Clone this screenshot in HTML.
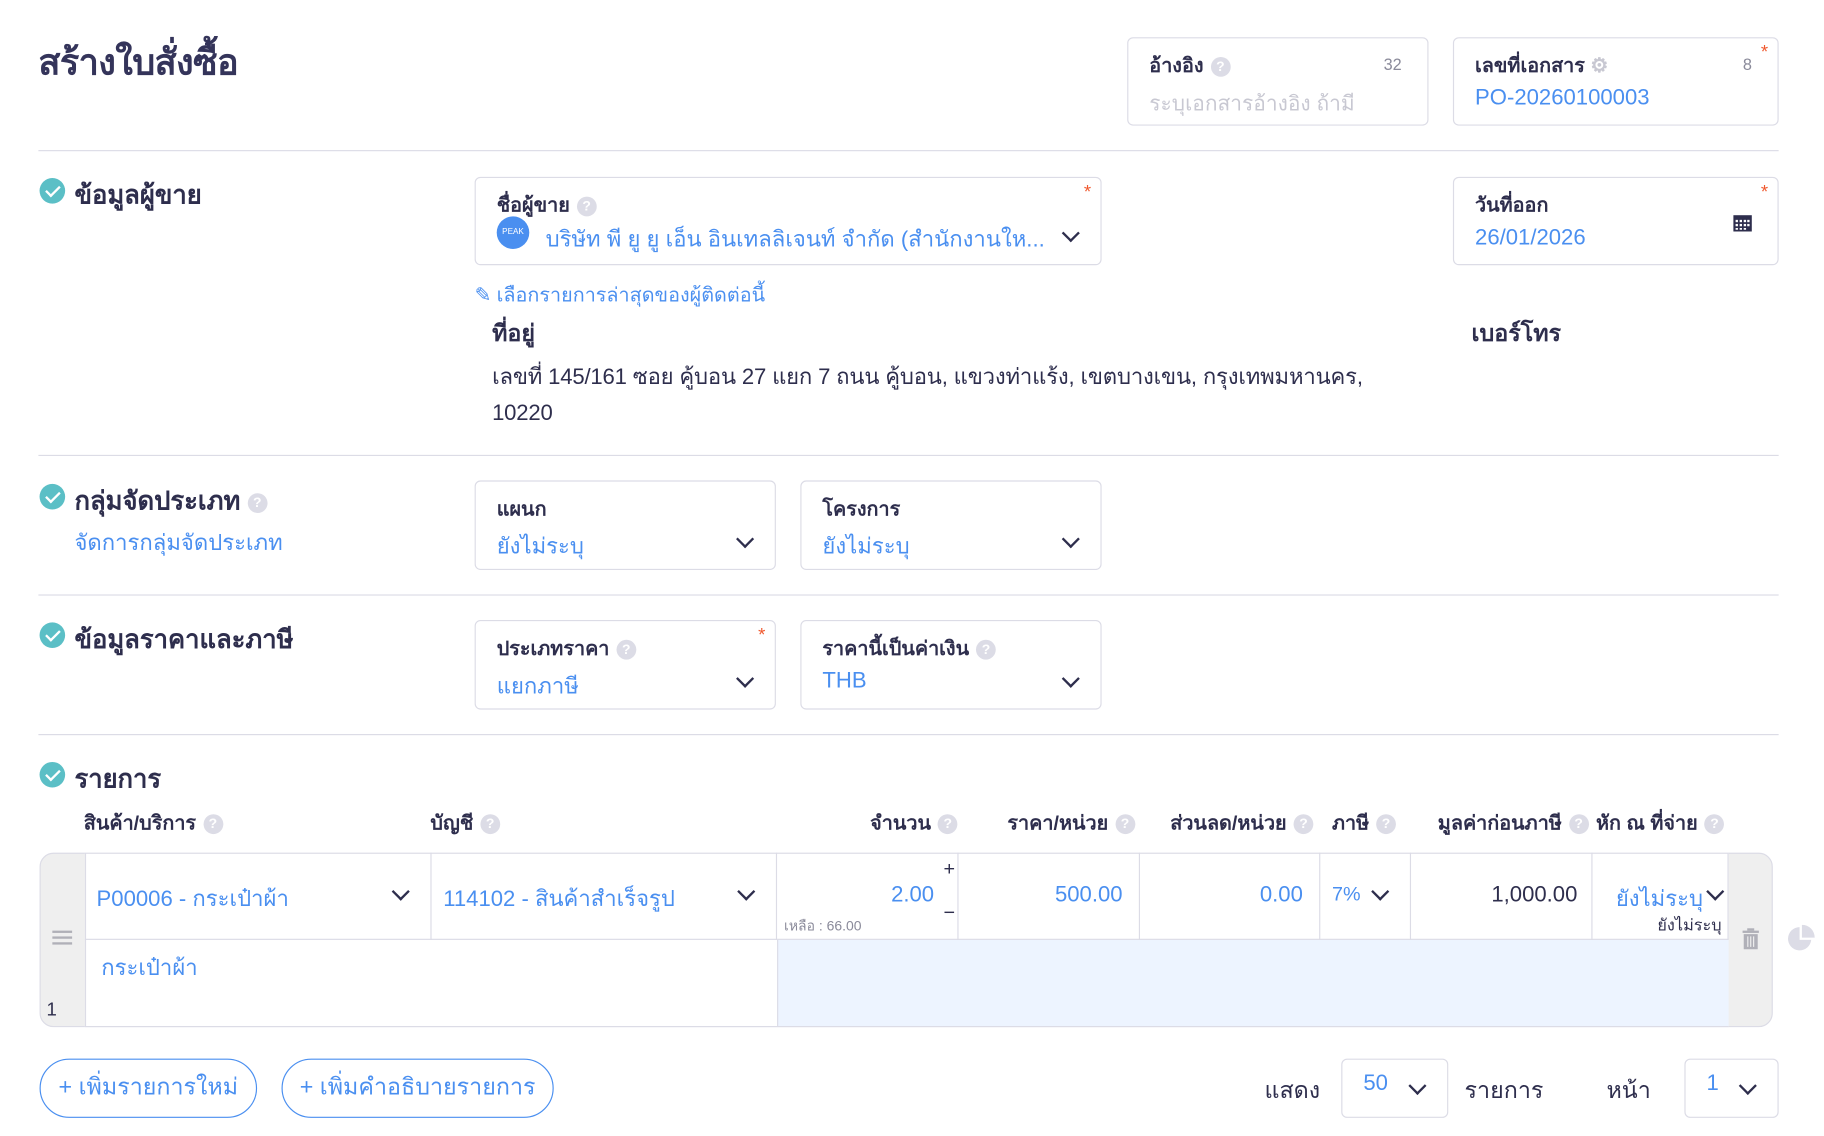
<!DOCTYPE html>
<html><head><meta charset="utf-8"><style>
html,body{margin:0;padding:0;background:#fff;width:1824px;height:1136px;overflow:hidden}
#w{position:absolute;left:0;top:0;width:1568px;height:976px;transform:scale(1.16327);transform-origin:0 0;font-family:"Liberation Sans","Noto Sans CJK SC",sans-serif;color:#2e2e4d}
.a{position:absolute;white-space:nowrap}
.box{position:absolute;border:1px solid #dcdce6;border-radius:5px;box-sizing:border-box;background:#fff}
.lbl{position:absolute;left:18px;top:10px;font-size:17px;font-weight:bold;color:#2e2e4d}
.val{position:absolute;left:18px;top:41px;font-size:19px;color:#4a8ff0}
.q{display:inline-block;width:17px;height:17px;border-radius:50%;background:#dcdce6;color:#fff;font-size:12px;text-align:center;line-height:17px;vertical-align:middle;margin-left:6px;font-weight:bold}
.star{position:absolute;right:8px;top:4px;color:#f0582e;font-size:16px}
.chev{position:absolute;width:9px;height:9px;border-right:2px solid #2e2e4d;border-bottom:2px solid #2e2e4d;transform:rotate(45deg)}
.hr{position:absolute;left:33px;width:1496px;height:1px;background:#dcdce6}
.chk{position:absolute;width:22px;height:22px;border-radius:50%;background:#5bbfc6}
.chk:after{content:"";position:absolute;left:8px;top:4px;width:5px;height:10px;border-right:2px solid #fff;border-bottom:2px solid #fff;transform:rotate(45deg)}
.sec{position:absolute;left:64px;font-size:22px;font-weight:bold}
.th{position:absolute;top:694px;font-size:17px;font-weight:bold}
.cell{position:absolute;top:733px;height:75px;border-right:1px solid #dcdce6;box-sizing:border-box}
.btn{position:absolute;top:910px;height:51px;border:1px solid #4a8ff0;border-radius:26px;box-sizing:border-box;color:#4a8ff0;font-size:20px;line-height:49px;text-align:center}
</style></head><body><div id="w">
<div class="a" style="left:33px;top:28px;font-size:31px;font-weight:bold;color:#34345a;letter-spacing:-0.5px">สร้างใบสั่งซื้อ</div>

<div class="box" style="left:969px;top:32px;width:259px;height:76px"><div class="lbl">อ้างอิง<span class="q">?</span></div><div class="a" style="right:22px;top:14px;font-size:14px;color:#8a8a9a">32</div><div class="val" style="color:#c8c8d2;font-size:18px">ระบุเอกสารอ้างอิง ถ้ามี</div></div>
<div class="box" style="left:1249px;top:32px;width:280px;height:76px"><div class="lbl">เลขที่เอกสาร <span style="color:#c8c8d2">⚙</span></div><div class="a" style="right:22px;top:14px;font-size:14px;color:#8a8a9a">8</div><div class="star">*</div><div class="val">PO-20260100003</div></div>
<div class="hr" style="top:129px"></div>

<div class="chk" style="left:34px;top:153px"></div><div class="sec" style="top:150px">ข้อมูลผู้ขาย</div>
<div class="box" style="left:408px;top:152px;width:539px;height:76px"><div class="lbl">ชื่อผู้ขาย<span class="q">?</span></div><div class="star">*</div>
<div class="a" style="left:18px;top:33px;width:28px;height:28px;border-radius:50%;background:#4a8ff0;color:#fff;font-size:7px;line-height:28px;text-align:center">PEAK</div>
<div class="val" style="left:60px;top:38px">บริษัท พี ยู ยู เอ็น อินเทลลิเจนท์ จำกัด (สำนักงานให...</div><div class="chev" style="right:20px;top:42px"></div></div>
<div class="box" style="left:1249px;top:152px;width:280px;height:76px"><div class="lbl">วันที่ออก</div><div class="star">*</div><div class="val">26/01/2026</div>
<svg class="a" style="right:22px;top:30px" width="16" height="16" viewBox="0 0 16 16"><rect x="0" y="2" width="16" height="14" fill="#2e2e4d"/><g fill="#fff"><rect x="2" y="6" width="2" height="2"/><rect x="5.5" y="6" width="2" height="2"/><rect x="9" y="6" width="2" height="2"/><rect x="12" y="6" width="2" height="2"/><rect x="2" y="9.5" width="2" height="2"/><rect x="5.5" y="9.5" width="2" height="2"/><rect x="9" y="9.5" width="2" height="2"/><rect x="12" y="9.5" width="2" height="2"/><rect x="2" y="13" width="2" height="1.5"/><rect x="5.5" y="13" width="2" height="1.5"/><rect x="9" y="13" width="2" height="1.5"/></g></svg></div>
<div class="a" style="left:408px;top:240px;font-size:17px;color:#4a8ff0">✎ เลือกรายการล่าสุดของผู้ติดต่อนี้</div>
<div class="a" style="left:423px;top:270px;font-size:20px;font-weight:bold">ที่อยู่</div>
<div class="a" style="left:1265px;top:270px;font-size:20px;font-weight:bold">เบอร์โทร</div>
<div class="a" style="left:423px;top:309px;font-size:19px;line-height:31px;letter-spacing:-0.15px">เลขที่ 145/161 ซอย คู้บอน 27 แยก 7 ถนน คู้บอน, แขวงท่าแร้ง, เขตบางเขน, กรุงเทพมหานคร,<br>10220</div>
<div class="hr" style="top:391px"></div>

<div class="chk" style="left:34px;top:416px"></div><div class="sec" style="top:413px">กลุ่มจัดประเภท<span class="q">?</span></div>
<div class="a" style="left:64px;top:452px;font-size:19px;color:#4a8ff0">จัดการกลุ่มจัดประเภท</div>
<div class="box" style="left:408px;top:413px;width:259px;height:77px"><div class="lbl">แผนก</div><div class="val">ยังไม่ระบุ</div><div class="chev" style="right:20px;top:44px"></div></div>
<div class="box" style="left:688px;top:413px;width:259px;height:77px"><div class="lbl">โครงการ</div><div class="val">ยังไม่ระบุ</div><div class="chev" style="right:20px;top:44px"></div></div>
<div class="hr" style="top:511px"></div>

<div class="chk" style="left:34px;top:535px"></div><div class="sec" style="top:532px">ข้อมูลราคาและภาษี</div>
<div class="box" style="left:408px;top:533px;width:259px;height:77px"><div class="lbl">ประเภทราคา<span class="q">?</span></div><div class="star">*</div><div class="val">แยกภาษี</div><div class="chev" style="right:20px;top:44px"></div></div>
<div class="box" style="left:688px;top:533px;width:259px;height:77px"><div class="lbl">ราคานี้เป็นค่าเงิน<span class="q">?</span></div><div class="val">THB</div><div class="chev" style="right:20px;top:44px"></div></div>
<div class="hr" style="top:631px"></div>

<div class="chk" style="left:34px;top:655px"></div><div class="sec" style="top:652px">รายการ</div>
<div class="th" style="left:72px">สินค้า/บริการ<span class="q">?</span></div>
<div class="th" style="left:370px">บัญชี<span class="q">?</span></div>
<div class="th" style="left:748px">จำนวน<span class="q">?</span></div>
<div class="th" style="left:866px">ราคา/หน่วย<span class="q">?</span></div>
<div class="th" style="left:1006px">ส่วนลด/หน่วย<span class="q">?</span></div>
<div class="th" style="left:1145px">ภาษี<span class="q">?</span></div>
<div class="th" style="left:1236px">มูลค่าก่อนภาษี<span class="q">?</span></div>
<div class="th" style="left:1372px">หัก ณ ที่จ่าย<span class="q">?</span></div>

<div class="a" style="left:34px;top:733px;width:1490px;height:150px;border:1px solid #dcdce6;border-radius:12px;box-sizing:border-box;background:#efefef"></div>
<div class="a" style="left:73px;top:733px;width:1413px;height:150px;background:#fff;border:1px solid #dcdce6;box-sizing:border-box"></div>
<div class="a" style="left:668px;top:808px;width:818px;height:74px;background:#edf4ff;border-left:1px solid #dcdce6;box-sizing:border-box"></div>
<div class="a" style="left:73px;top:807px;width:1413px;height:1px;background:#dcdce6"></div>
<div class="cell" style="left:73px;width:298px"><div class="a" style="left:10px;top:25px;font-size:19px;color:#4a8ff0">P00006 - กระเป๋าผ้า</div><div class="chev" style="right:20px;top:28px"></div></div>
<div class="cell" style="left:371px;width:297px"><div class="a" style="left:10px;top:25px;font-size:19px;color:#4a8ff0">114102 - สินค้าสำเร็จรูป</div><div class="chev" style="right:20px;top:28px"></div></div>
<div class="cell" style="left:668px;width:156px"><div class="a" style="right:20px;top:26px;font-size:19px;color:#4a8ff0">2.00</div><div class="a" style="right:2px;top:4px;font-size:17px">+</div><div class="a" style="right:2px;top:42px;font-size:17px">−</div><div class="a" style="left:6px;top:54px;font-size:12px;color:#8a8a9a">เหลือ : 66.00</div></div>
<div class="cell" style="left:824px;width:156px"><div class="a" style="right:14px;top:26px;font-size:19px;color:#4a8ff0">500.00</div></div>
<div class="cell" style="left:980px;width:155px"><div class="a" style="right:14px;top:26px;font-size:19px;color:#4a8ff0">0.00</div></div>
<div class="cell" style="left:1135px;width:78px"><div class="a" style="left:10px;top:26px;font-size:17px;color:#4a8ff0">7%</div><div class="chev" style="right:20px;top:28px"></div></div>
<div class="cell" style="left:1213px;width:156px"><div class="a" style="right:12px;top:26px;font-size:19px">1,000.00</div></div>
<div class="cell" style="left:1369px;width:117px;border-right:none"><div class="a" style="right:22px;top:25px;font-size:19px;color:#4a8ff0">ยังไม่ระบุ</div><div class="chev" style="right:6px;top:28px"></div><div class="a" style="right:6px;top:52px;font-size:14px">ยังไม่ระบุ</div></div>
<div class="a" style="left:87px;top:817px;font-size:19px;color:#4a8ff0">กระเป๋าผ้า</div>
<div class="a" style="left:45px;top:800px;width:17px;height:2px;background:#b0b0b8;box-shadow:0 5px 0 #b0b0b8,0 10px 0 #b0b0b8"></div>
<div class="a" style="left:40px;top:860px;font-size:16px">1</div>
<svg class="a" style="left:1497px;top:797px" width="16" height="20" viewBox="0 0 16 20"><rect x="1" y="3" width="14" height="2" fill="#b0b0b8"/><rect x="5" y="1" width="6" height="2" fill="#b0b0b8"/><path d="M2 6h12v13H2z" fill="#b0b0b8"/><path d="M5.5 8v9M8 8v9M10.5 8v9" stroke="#efefef" stroke-width="1"/></svg>
<svg class="a" style="left:1537px;top:795px" width="24" height="24" viewBox="0 0 24 24"><path d="M10 2A10 10 0 1 0 20 13H10z" fill="#dcdce6"/><path d="M12 0v11h11A11 11 0 0 0 12 0z" fill="#dcdce6"/></svg>

<div class="btn" style="left:34px;width:187px">+ เพิ่มรายการใหม่</div>
<div class="btn" style="left:242px;width:234px">+ เพิ่มคำอธิบายรายการ</div>
<div class="a" style="left:1087px;top:921px;font-size:20px">แสดง</div>
<div class="box" style="left:1153px;top:910px;width:92px;height:51px"><div class="a" style="left:18px;top:10px;font-size:19px;color:#4a8ff0">50</div><div class="chev" style="right:20px;top:17px"></div></div>
<div class="a" style="left:1259px;top:921px;font-size:20px">รายการ</div>
<div class="a" style="left:1381px;top:921px;font-size:20px">หน้า</div>
<div class="box" style="left:1448px;top:910px;width:81px;height:51px"><div class="a" style="left:18px;top:10px;font-size:19px;color:#4a8ff0">1</div><div class="chev" style="right:20px;top:17px"></div></div>
</div></body></html>
